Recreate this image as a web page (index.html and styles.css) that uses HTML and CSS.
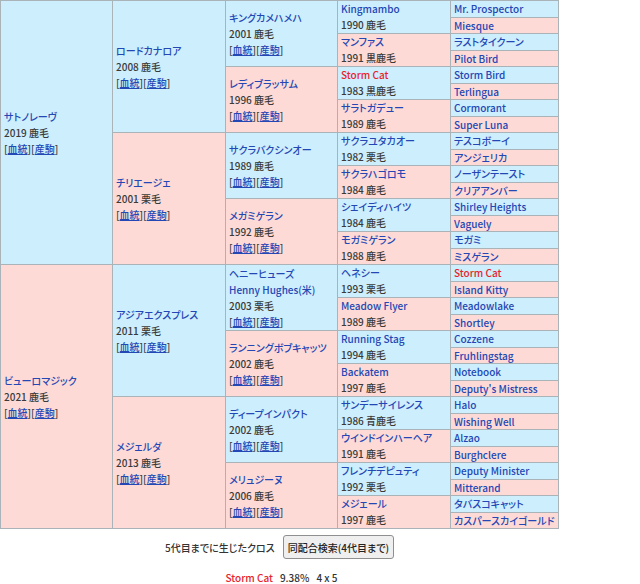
FILE: index.html
```html
<!DOCTYPE html>
<html lang="ja">
<head>
<meta charset="utf-8">
<title>血統表</title>
<link rel="stylesheet" href="styles.css">
</head>
<body>
<div class="ped">
  <!-- sire line -->
  <div class="node">
    <div class="cell g1 sire"><a class="nm">サトノレーヴ</a><div class="yr">2019 鹿毛</div><div class="lk">[<a>血統</a>][<a>産駒</a>]</div></div>
    <div class="kids">
      <div class="node">
        <div class="cell g2 sire"><a class="nm">ロードカナロア</a><div class="yr">2008 鹿毛</div><div class="lk">[<a>血統</a>][<a>産駒</a>]</div></div>
        <div class="kids">
          <div class="node">
            <div class="cell g3 sire"><a class="nm">キングカメハメハ</a><div class="yr">2001 鹿毛</div><div class="lk">[<a>血統</a>][<a>産駒</a>]</div></div>
            <div class="kids">
              <div class="node">
                <div class="cell g4 sire"><a class="nm">Kingmambo</a><div class="yr">1990 鹿毛</div></div>
                <div class="kids">
                  <div class="cell g5 sire"><a class="nm">Mr. Prospector</a></div>
                  <div class="cell g5 dam"><a class="nm">Miesque</a></div>
                </div>
              </div>
              <div class="node">
                <div class="cell g4 dam"><a class="nm">マンファス</a><div class="yr">1991 黒鹿毛</div></div>
                <div class="kids">
                  <div class="cell g5 sire"><a class="nm">ラストタイクーン</a></div>
                  <div class="cell g5 dam"><a class="nm">Pilot Bird</a></div>
                </div>
              </div>
            </div>
          </div>
          <div class="node">
            <div class="cell g3 dam"><a class="nm">レディブラッサム</a><div class="yr">1996 鹿毛</div><div class="lk">[<a>血統</a>][<a>産駒</a>]</div></div>
            <div class="kids">
              <div class="node">
                <div class="cell g4 sire"><a class="nm cross">Storm Cat</a><div class="yr">1983 黒鹿毛</div></div>
                <div class="kids">
                  <div class="cell g5 sire"><a class="nm">Storm Bird</a></div>
                  <div class="cell g5 dam"><a class="nm">Terlingua</a></div>
                </div>
              </div>
              <div class="node">
                <div class="cell g4 dam"><a class="nm">サラトガデュー</a><div class="yr">1989 鹿毛</div></div>
                <div class="kids">
                  <div class="cell g5 sire"><a class="nm">Cormorant</a></div>
                  <div class="cell g5 dam"><a class="nm">Super Luna</a></div>
                </div>
              </div>
            </div>
          </div>
        </div>
      </div>
      <div class="node">
        <div class="cell g2 dam"><a class="nm">チリエージェ</a><div class="yr">2001 栗毛</div><div class="lk">[<a>血統</a>][<a>産駒</a>]</div></div>
        <div class="kids">
          <div class="node">
            <div class="cell g3 sire"><a class="nm">サクラバクシンオー</a><div class="yr">1989 鹿毛</div><div class="lk">[<a>血統</a>][<a>産駒</a>]</div></div>
            <div class="kids">
              <div class="node">
                <div class="cell g4 sire"><a class="nm">サクラユタカオー</a><div class="yr">1982 栗毛</div></div>
                <div class="kids">
                  <div class="cell g5 sire"><a class="nm">テスコボーイ</a></div>
                  <div class="cell g5 dam"><a class="nm">アンジェリカ</a></div>
                </div>
              </div>
              <div class="node">
                <div class="cell g4 dam"><a class="nm">サクラハゴロモ</a><div class="yr">1984 鹿毛</div></div>
                <div class="kids">
                  <div class="cell g5 sire"><a class="nm">ノーザンテースト</a></div>
                  <div class="cell g5 dam"><a class="nm">クリアアンバー</a></div>
                </div>
              </div>
            </div>
          </div>
          <div class="node">
            <div class="cell g3 dam"><a class="nm">メガミゲラン</a><div class="yr">1992 鹿毛</div><div class="lk">[<a>血統</a>][<a>産駒</a>]</div></div>
            <div class="kids">
              <div class="node">
                <div class="cell g4 sire"><a class="nm">シェイディハイツ</a><div class="yr">1984 鹿毛</div></div>
                <div class="kids">
                  <div class="cell g5 sire"><a class="nm">Shirley Heights</a></div>
                  <div class="cell g5 dam"><a class="nm">Vaguely</a></div>
                </div>
              </div>
              <div class="node">
                <div class="cell g4 dam"><a class="nm">モガミゲラン</a><div class="yr">1988 鹿毛</div></div>
                <div class="kids">
                  <div class="cell g5 sire"><a class="nm">モガミ</a></div>
                  <div class="cell g5 dam"><a class="nm">ミスゲラン</a></div>
                </div>
              </div>
            </div>
          </div>
        </div>
      </div>
    </div>
  </div>
  <!-- dam line -->
  <div class="node">
    <div class="cell g1 dam"><a class="nm">ビューロマジック</a><div class="yr">2021 鹿毛</div><div class="lk">[<a>血統</a>][<a>産駒</a>]</div></div>
    <div class="kids">
      <div class="node">
        <div class="cell g2 sire"><a class="nm">アジアエクスプレス</a><div class="yr">2011 栗毛</div><div class="lk">[<a>血統</a>][<a>産駒</a>]</div></div>
        <div class="kids">
          <div class="node">
            <div class="cell g3 sire"><a class="nm">ヘニーヒューズ</a><a class="nm">Henny Hughes(米)</a><div class="yr">2003 栗毛</div><div class="lk">[<a>血統</a>][<a>産駒</a>]</div></div>
            <div class="kids">
              <div class="node">
                <div class="cell g4 sire"><a class="nm">ヘネシー</a><div class="yr">1993 栗毛</div></div>
                <div class="kids">
                  <div class="cell g5 sire"><a class="nm cross">Storm Cat</a></div>
                  <div class="cell g5 dam"><a class="nm">Island Kitty</a></div>
                </div>
              </div>
              <div class="node">
                <div class="cell g4 dam"><a class="nm">Meadow Flyer</a><div class="yr">1989 鹿毛</div></div>
                <div class="kids">
                  <div class="cell g5 sire"><a class="nm">Meadowlake</a></div>
                  <div class="cell g5 dam"><a class="nm">Shortley</a></div>
                </div>
              </div>
            </div>
          </div>
          <div class="node">
            <div class="cell g3 dam"><a class="nm">ランニングボブキャッツ</a><div class="yr">2002 鹿毛</div><div class="lk">[<a>血統</a>][<a>産駒</a>]</div></div>
            <div class="kids">
              <div class="node">
                <div class="cell g4 sire"><a class="nm">Running Stag</a><div class="yr">1994 鹿毛</div></div>
                <div class="kids">
                  <div class="cell g5 sire"><a class="nm">Cozzene</a></div>
                  <div class="cell g5 dam"><a class="nm">Fruhlingstag</a></div>
                </div>
              </div>
              <div class="node">
                <div class="cell g4 dam"><a class="nm">Backatem</a><div class="yr">1997 鹿毛</div></div>
                <div class="kids">
                  <div class="cell g5 sire"><a class="nm">Notebook</a></div>
                  <div class="cell g5 dam"><a class="nm">Deputy's Mistress</a></div>
                </div>
              </div>
            </div>
          </div>
        </div>
      </div>
      <div class="node">
        <div class="cell g2 dam"><a class="nm">メジェルダ</a><div class="yr">2013 鹿毛</div><div class="lk">[<a>血統</a>][<a>産駒</a>]</div></div>
        <div class="kids">
          <div class="node">
            <div class="cell g3 sire"><a class="nm">ディープインパクト</a><div class="yr">2002 鹿毛</div><div class="lk">[<a>血統</a>][<a>産駒</a>]</div></div>
            <div class="kids">
              <div class="node">
                <div class="cell g4 sire"><a class="nm">サンデーサイレンス</a><div class="yr">1986 青鹿毛</div></div>
                <div class="kids">
                  <div class="cell g5 sire"><a class="nm">Halo</a></div>
                  <div class="cell g5 dam"><a class="nm">Wishing Well</a></div>
                </div>
              </div>
              <div class="node">
                <div class="cell g4 dam"><a class="nm">ウインドインハーヘア</a><div class="yr">1991 鹿毛</div></div>
                <div class="kids">
                  <div class="cell g5 sire"><a class="nm">Alzao</a></div>
                  <div class="cell g5 dam"><a class="nm">Burghclere</a></div>
                </div>
              </div>
            </div>
          </div>
          <div class="node">
            <div class="cell g3 dam"><a class="nm">メリュジーヌ</a><div class="yr">2006 鹿毛</div><div class="lk">[<a>血統</a>][<a>産駒</a>]</div></div>
            <div class="kids">
              <div class="node">
                <div class="cell g4 sire"><a class="nm">フレンチデピュティ</a><div class="yr">1992 栗毛</div></div>
                <div class="kids">
                  <div class="cell g5 sire"><a class="nm">Deputy Minister</a></div>
                  <div class="cell g5 dam"><a class="nm">Mitterand</a></div>
                </div>
              </div>
              <div class="node">
                <div class="cell g4 dam"><a class="nm">メジェール</a><div class="yr">1997 鹿毛</div></div>
                <div class="kids">
                  <div class="cell g5 sire"><a class="nm">タバスコキャット</a></div>
                  <div class="cell g5 dam"><a class="nm">カスパースカイゴールド</a></div>
                </div>
              </div>
            </div>
          </div>
        </div>
      </div>
    </div>
  </div>
</div>

<div class="crossbox">
  <div class="crossrow">
    <span class="label">5代目までに生じたクロス</span>
    <button class="btn" type="button">同配合検索(4代目まで)</button>
  </div>
  <div class="crosslist">
    <span class="cname">Storm Cat</span><span class="pct">9.38%</span><span class="gen">4 x 5</span>
  </div>
</div>
</body>
</html>
```

FILE: styles.css
```css
html, body {
  margin: 0;
  padding: 0;
  background: #ffffff;
}

body {
  font-family: "Noto Sans CJK JP", "Noto Sans", sans-serif;
  font-size: 10px;
  font-weight: 500;
  font-feature-settings: "palt";
  color: #333333;
}

.ped {
  width: 557px;
  background: #a9b3b8;
  padding: 1px;
  display: flex;
  flex-direction: column;
  gap: 1px;
}

.node {
  display: flex;
  gap: 1px;
}

.kids {
  display: flex;
  flex-direction: column;
  gap: 1px;
  flex: 1;
}

.cell {
  display: flex;
  flex-direction: column;
  justify-content: center;
  padding: 0 3px;
  line-height: 16px;
  white-space: nowrap;
  overflow: visible;
  box-sizing: border-box;
}

.sire { background: #cdeefc; }
.dam  { background: #fddad6; }

.g1 { width: 111px; }
.g2 { width: 112px; }
.g3 { width: 111px; }
.g4 { width: 112px; }
.g5 { width: 107px; height: 15.5px; line-height: 15.5px; }

.nm {
  color: #2347b5;
  text-decoration: none;
}

.nm.cross {
  color: #e8242c;
}

.yr {
  color: #3a3a3a;
}

.lk {
  color: #3a3a3a;
}

.lk a {
  color: #2347b5;
  text-decoration: underline;
}

.crossbox {
  width: 559px;
  display: flex;
  flex-direction: column;
  align-items: center;
}

.crossrow {
  display: flex;
  align-items: center;
  gap: 8px;
  margin-top: 6px;
}

.label {
  color: #333333;
}

.btn {
  font-family: "Noto Sans CJK JP", "Noto Sans", sans-serif;
  font-size: 10px;
  font-weight: 500;
  font-feature-settings: "palt";
  color: #222222;
  height: 24px;
  padding: 0 4px;
  border: 1px solid #8f8f8f;
  border-radius: 3px;
  background: #efefef;
}

.crosslist {
  margin-top: 11px;
  line-height: 16px;
  display: flex;
  gap: 7px;
  padding-left: 4px;
}

.cname {
  color: #e8242c;
}

.pct, .gen {
  color: #333333;
}
```
